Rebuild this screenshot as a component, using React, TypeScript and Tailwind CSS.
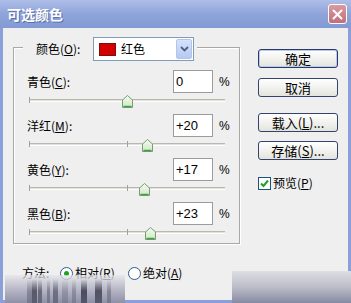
import React from "react";

const FONT = '"Noto Sans CJK SC", "Liberation Sans", sans-serif';

const rows = [
  { label: "青色", key: "C", value: "0", pos: 0 },
  { label: "洋红", key: "M", value: "+20", pos: 20 },
  { label: "黄色", key: "Y", value: "+17", pos: 17 },
  { label: "黑色", key: "B", value: "+23", pos: 23 },
];

const stripes = [
  { l: 22, w: 5, o: 0.35 },
  { l: 27, w: 5, o: 0.75 },
  { l: 33, w: 4, o: 0.6 },
  { l: 42, w: 3, o: 0.4 },
  { l: 48, w: 5, o: 0.55 },
  { l: 57, w: 6, o: 0.25 },
  { l: 67, w: 4, o: 0.3 },
  { l: 76, w: 6, o: 0.85 },
  { l: 90, w: 7, o: 0.8 },
  { l: 102, w: 4, o: 0.35 },
];

function Btn({ children, def }: { children: React.ReactNode; def?: boolean }) {
  return (
    <div
      className={`w-[80px] h-[19px] rounded-[3px] border ${def ? "border-[#2a3a66] shadow-[inset_0_0_0_1px_#b9c9ef]" : "border-[#34436a]"} bg-gradient-to-b from-[#ffffff] to-[#e4e4de] text-[13px] leading-none text-black flex items-center justify-center`}
    >
      {children}
    </div>
  );
}

function Knob() {
  return (
    <svg width="11" height="13" viewBox="0 0 11 13">
      <defs>
        <linearGradient id="kg" x1="0" y1="0" x2="0" y2="1">
          <stop offset="0" stopColor="#f4fbf0" />
          <stop offset="1" stopColor="#cfe8c4" />
        </linearGradient>
      </defs>
      <path d="M5.5 0.5 L10.5 5 L10.5 12.5 L0.5 12.5 L0.5 5 Z" fill="url(#kg)" stroke="#7a9a7a" strokeWidth="1" />
      <path d="M1.5 11.5 L9.5 11.5" stroke="#3fa33f" strokeWidth="1.5" />
    </svg>
  );
}

export default function App() {
  return (
    <div className="w-[351px] h-[303px] relative overflow-hidden bg-[#8ba0d8]" style={{ fontFamily: FONT }}>
      {/* title bar */}
      <div className="h-[28px] flex items-center justify-between pl-[7px] pr-[4px] bg-gradient-to-b from-[#aebee8] via-[#8fa4da] to-[#8299d4]">
        <span className="text-white text-[14px] font-bold [text-shadow:1px_1px_0_#5a6ea8]">可选颜色</span>
        <div className="w-[19px] h-[20px] rounded-[3px] border border-white bg-gradient-to-b from-[#d99aa2] to-[#c0707c] flex items-center justify-center">
          <svg width="11" height="11" viewBox="0 0 11 11">
            <path d="M1.5 1.5 L9.5 9.5 M9.5 1.5 L1.5 9.5" stroke="white" strokeWidth="2" strokeLinecap="round" />
          </svg>
        </div>
      </div>

      {/* body */}
      <div className="mx-[3px] h-[272px] bg-[#efefef] flex">
        {/* left column */}
        <div className="ml-[10px] flex flex-col">
          <div className="mt-[19px] w-[227px] h-[197px] relative border border-[#a9a9a4] shadow-[inset_1px_1px_0_#ffffff,1px_1px_0_#ffffff] pt-[22px]">
            {/* legend */}
            <div className="absolute left-[9px] top-[-11px] bg-[#efefef] pl-[13px] pr-[3px] flex items-center">
              <span className="w-[57px] text-[12px] text-black">
                颜色(<u>O</u>):
              </span>
              <div className="w-[101px] h-[24px] border border-[#7f9db9] bg-white flex items-center">
                <div className="ml-[5px] w-[17px] h-[13px] bg-[#d40000] border border-[#7a1010]" />
                <span className="ml-[5px] text-[12px] text-black flex-1">红色</span>
                <div className="w-[16px] h-[20px] mr-[1px] rounded-[2px] bg-gradient-to-b from-[#d6e2fb] to-[#b6c9f1] border border-[#b3c4ea] flex items-center justify-center">
                  <svg width="9" height="6" viewBox="0 0 9 6">
                    <path d="M1 1 L4.5 4.5 L8 1" stroke="#4d6185" strokeWidth="1.8" fill="none" />
                  </svg>
                </div>
              </div>
            </div>

            {rows.map((r) => (
              <div key={r.key} className="h-[44px]">
                <div className="flex items-center h-[23px] pl-[13px]">
                  <span className="w-[146px] text-[12px] text-black">
                    {r.label}(<u>{r.key}</u>):
                  </span>
                  <div className="w-[40px] h-[23px] border border-[#9b9b9b] bg-white flex items-center pl-[2px] text-[13px] text-black" style={{ fontFamily: '"Liberation Sans", sans-serif' }}>
                    {r.value}
                  </div>
                  <span className="ml-[6px] text-[12px] text-black" style={{ fontFamily: '"Liberation Sans", sans-serif' }}>%</span>
                </div>
                <div className="relative ml-[15px] w-[196px] h-[21px]">
                  <div className="absolute left-0 right-0 top-[6px] h-[3px] border-t border-[#b8b8b0] border-b border-b-white bg-[#e2e2da]" />
                  <div className="absolute left-0 top-[4px] w-px h-[6px] bg-[#a0a0a0]" />
                  <div className="absolute left-[98px] top-[4px] w-px h-[6px] bg-[#a0a0a0]" />
                  <div className="absolute top-[2px]" style={{ left: 98 + r.pos - 5 }}>
                    <Knob />
                  </div>
                </div>
              </div>
            ))}
          </div>

          {/* method row */}
          <div className="mt-[21px] pl-[9px] h-[16px] flex items-center text-[12px] text-black">
            <span className="w-[38px]">方法:</span>
            <div className="w-[13px] h-[13px] rounded-full border border-[#2f5a8a] bg-white flex items-center justify-center">
              <div className="w-[5px] h-[5px] rounded-full bg-[#21a121]" />
            </div>
            <span className="ml-[2px] w-[53px]">
              相对(<u>R</u>)
            </span>
            <div className="w-[13px] h-[13px] rounded-full border border-[#2f5a8a] bg-white" />
            <span className="ml-[2px]">
              绝对(<u>A</u>)
            </span>
          </div>
        </div>

        {/* right column */}
        <div className="ml-[18px] flex flex-col">
          <div className="mt-[21px]">
            <Btn def>确定</Btn>
          </div>
          <div className="mt-[10px]">
            <Btn>取消</Btn>
          </div>
          <div className="mt-[16px]">
            <Btn>
              载入(<u>L</u>)...
            </Btn>
          </div>
          <div className="mt-[9px]">
            <Btn>
              存储(<u>S</u>)...
            </Btn>
          </div>
          <div className="mt-[14px] flex items-center text-[12px] text-black">
            <div className="w-[13px] h-[13px] border border-[#1c5180] bg-white flex items-center justify-center">
              <svg width="9" height="9" viewBox="0 0 9 9">
                <path d="M1 4.5 L3.5 7 L8 1.5" stroke="#21a121" strokeWidth="2" fill="none" />
              </svg>
            </div>
            <span className="ml-[2px]">
              预览(<u>P</u>)
            </span>
          </div>
        </div>
      </div>

      {/* watermark smears at bottom */}
      <div className="absolute left-[5px] top-[275px] w-[120px] h-[28px] bg-gradient-to-b from-[#e4e4ea]/70 via-[#b8b8c8] to-[#8e90a6]">
        {stripes.map((s, i) => (
          <div
            key={i}
            className="absolute top-[4px] bottom-0 bg-gradient-to-b from-transparent via-[#3a3a4a] to-[#4a4c60]"
            style={{ left: s.l, width: s.w, opacity: s.o }}
          />
        ))}
      </div>
      <div className="absolute left-[232px] top-[271px] w-[119px] h-[32px] bg-gradient-to-b from-[#dedee3] via-[#bcbdc8] to-[#878ba2]" />
    </div>
  );
}
